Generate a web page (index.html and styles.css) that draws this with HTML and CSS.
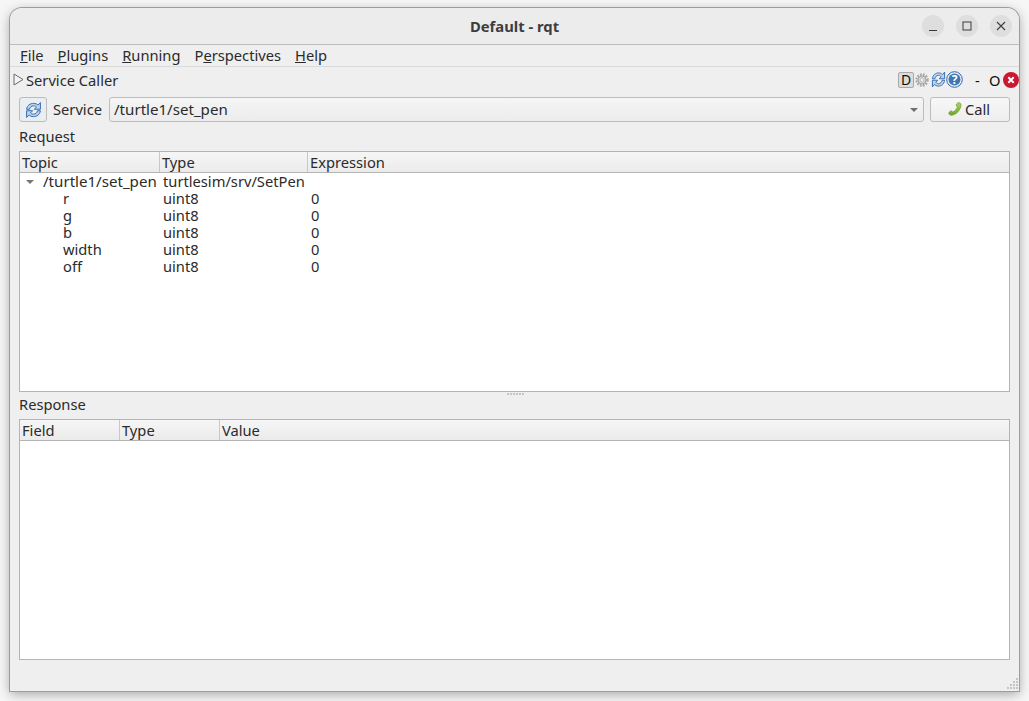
FILE: index.html
```html
<!DOCTYPE html>
<html lang="en">
<head>
    <meta charset="UTF-8">
    <title>Default - rqt</title>
    <link rel="stylesheet" href="styles.css">
</head>
<body>
    <div class="window">
        <header class="titlebar">
            <span class="title">Default - rqt</span>
            <div class="win-btns">
                <button class="win-btn"><svg width="12" height="12" viewBox="0 0 12 12"><path d="M2 10.500h8" stroke="#3d3d3d" stroke-width="1"/></svg></button>
                <button class="win-btn"><svg width="12" height="12" viewBox="0 0 12 12"><rect x="2" y="2" width="8" height="8" fill="none" stroke="#3d3d3d"/></svg></button>
                <button class="win-btn"><svg width="12" height="12" viewBox="0 0 12 12"><path d="M2 2l8 8M10 2l-8 8" stroke="#3d3d3d" stroke-width="1.100"/></svg></button>
            </div>
        </header>

        <nav class="menubar">
            <span><u>F</u>ile</span>
            <span><u>P</u>lugins</span>
            <span><u>R</u>unning</span>
            <span>P<u>e</u>rspectives</span>
            <span><u>H</u>elp</span>
        </nav>

        <div class="dock-title">
            <svg class="dock-arrow" width="11" height="13" viewBox="0 0 11 13"><path d="M1 1l9 5.500-9 5.500z" fill="#f4f4f4" stroke="#6a6a6a"/></svg>
            <span class="dock-name">Service Caller</span>
            <div class="dock-tools">
                <span class="tool-d">D</span>
                <svg width="14" height="16" viewBox="0 0 14 16"><circle cx="7" cy="8" r="5.500" fill="none" stroke="#a8a8a8" stroke-width="2.400" stroke-dasharray="1.800 1.100"/><circle cx="7" cy="8" r="4" fill="#dedede" stroke="#8f8f8f" stroke-width=".8"/><circle cx="7" cy="8" r="2" fill="#efefef" stroke="#a8a8a8" stroke-width=".7"/></svg>
                <svg class="tool-refresh" width="15" height="17" viewBox="0 0 16 16" preserveAspectRatio="none"><path d="M1.500 7.300C2 3.500 5 1.800 8 1.800c2 0 3.300.6 4.300 1.600L14.500 1v6.300H8.800l2-2C10 4.400 9 4.100 8 4.100 6 4.100 4.600 5.200 4.200 7.300z" fill="#bcd4ee" stroke="#2f68ab" stroke-width=".9"/><path d="M14.500 8.700C14 12.500 11 14.200 8 14.200c-2 0-3.300-.6-4.300-1.600L1.500 15V8.700h5.700l-2 2c.8.900 1.800 1.200 2.800 1.200 2 0 3.400-1.100 3.800-3.200z" fill="#bcd4ee" stroke="#2f68ab" stroke-width=".9"/></svg>
                <svg width="17" height="17" viewBox="0 0 17 17"><circle cx="8.500" cy="8.500" r="7.800" fill="#eef3f9" stroke="#2f65a5" stroke-width="1"/><circle cx="8.500" cy="8.500" r="6" fill="#3f78b8"/><text x="8.500" y="12.500" class="help-q" text-anchor="middle">?</text></svg>
                <span class="tool-min">-</span>
                <span class="tool-float">O</span>
                <svg class="tool-close" width="16" height="16" viewBox="0 0 16 16"><circle cx="8" cy="8" r="8" fill="#c9182f"/><path d="M5.300 5.300l5.400 5.400M10.700 5.300l-5.400 5.400" stroke="#fff" stroke-width="2"/></svg>
            </div>
        </div>

        <div class="content">
            <div class="service-row">
                <button class="refresh-btn">
                    <svg width="17" height="18" viewBox="0 0 16 16"><path d="M1.500 7.300C2 3.500 5 1.800 8 1.800c2 0 3.300.6 4.300 1.600L14.500 1v6.300H8.800l2-2C10 4.400 9 4.100 8 4.100 6 4.100 4.600 5.200 4.200 7.300z" fill="#bcd4ee" stroke="#2f68ab" stroke-width=".9"/><path d="M14.500 8.700C14 12.500 11 14.200 8 14.200c-2 0-3.300-.6-4.300-1.600L1.500 15V8.700h5.700l-2 2c.8.900 1.800 1.200 2.800 1.200 2 0 3.400-1.100 3.800-3.200z" fill="#bcd4ee" stroke="#2f68ab" stroke-width=".9"/></svg>
                </button>
                <span class="service-label">Service</span>
                <div class="combo">
                    <span class="path">/turtle1/set_pen</span>
                    <i class="combo-arrow"></i>
                </div>
                <button class="call-btn">
                    <svg width="14" height="14" viewBox="0 0 14 14"><defs><linearGradient id="phone" x1="0" y1="0" x2="0" y2="1"><stop offset="0" stop-color="#a9d45f"/><stop offset="1" stop-color="#6ea82a"/></linearGradient></defs><path d="M10 .8c1.300-.5 2.600.3 3 1.300.2 2.500-1 5.500-3 7.700-2 2.200-5 3.700-7.400 3.400-1.100-.3-2-1.500-1.700-2.500.5-.9 1.500-1.800 2.300-1.900l1.600 1.200c1.700-.5 4.200-3.200 4.500-5L8.200 3c0-.8.900-1.800 1.800-2.200z" fill="url(#phone)" stroke="#5f9320" stroke-width=".6"/></svg>
                    <span>Call</span>
                </button>
            </div>

            <div class="group-label request-label">Request</div>
            <div class="tree request-tree">
                <div class="tree-head">
                    <div class="head-cell col-topic">Topic</div>
                    <div class="head-cell col-type">Type</div>
                    <div class="head-cell col-rest">Expression</div>
                </div>
                <div class="tree-row">
                    <div class="col-topic cell-parent"><i class="expander"></i><span class="path">/turtle1/set_pen</span></div>
                    <div class="col-type cell">turtlesim/srv/SetPen</div>
                    <div class="col-rest cell"></div>
                </div>
                <div class="tree-row">
                    <div class="col-topic cell-child">r</div>
                    <div class="col-type cell">uint8</div>
                    <div class="col-rest cell">0</div>
                </div>
                <div class="tree-row">
                    <div class="col-topic cell-child">g</div>
                    <div class="col-type cell">uint8</div>
                    <div class="col-rest cell">0</div>
                </div>
                <div class="tree-row">
                    <div class="col-topic cell-child">b</div>
                    <div class="col-type cell">uint8</div>
                    <div class="col-rest cell">0</div>
                </div>
                <div class="tree-row">
                    <div class="col-topic cell-child">width</div>
                    <div class="col-type cell">uint8</div>
                    <div class="col-rest cell">0</div>
                </div>
                <div class="tree-row">
                    <div class="col-topic cell-child">off</div>
                    <div class="col-type cell">uint8</div>
                    <div class="col-rest cell">0</div>
                </div>
            </div>

            <div class="splitter"><i></i><i></i><i></i><i></i><i></i><i></i></div>

            <div class="group-label response-label">Response</div>
            <div class="tree response-tree">
                <div class="tree-head">
                    <div class="head-cell col-field">Field</div>
                    <div class="head-cell col-rtype">Type</div>
                    <div class="head-cell col-rest">Value</div>
                </div>
            </div>
        </div>

        <footer class="statusbar">
            <svg width="14" height="14" viewBox="0 0 14 14" fill="#c4c4c4"><rect x="11" y="1" width="2" height="2"/><rect x="8" y="4" width="2" height="2"/><rect x="11" y="4" width="2" height="2"/><rect x="5" y="7" width="2" height="2"/><rect x="8" y="7" width="2" height="2"/><rect x="11" y="7" width="2" height="2"/><rect x="2" y="10" width="2" height="2"/><rect x="5" y="10" width="2" height="2"/><rect x="8" y="10" width="2" height="2"/><rect x="11" y="10" width="2" height="2"/></svg>
        </footer>
    </div>
</body>
</html>
```
FILE: styles.css
```css
* {
    box-sizing: border-box;
}

html, body {
    height: 100%;
}

body {
    margin: 0;
    padding: 8px 10px 10px;
    background: #f6f6f6;
    overflow: hidden;
    font-family: "Noto Sans", "Open Sans", sans-serif;
    font-size: 14.7px;
    color: #2b2b2b;
}

button {
    font: inherit;
    color: inherit;
    padding: 0;
}

.path {
    font-size: 15.1px;
}

/* window frame */
.window {
    display: flex;
    flex-direction: column;
    height: 683px;
    background: #efefef;
    border-radius: 12px 12px 0 0;
    box-shadow: 0 0 0 1px #9c9c9c, 0 3px 12px rgba(0, 0, 0, .35);
}

.titlebar {
    position: relative;
    flex: none;
    display: flex;
    align-items: center;
    justify-content: center;
    height: 37px;
    background: #ececec;
    border-bottom: 1px solid #bdbdbd;
    border-radius: 12px 12px 0 0;
}

.title {
    font-weight: 700;
    font-size: 14.8px;
    color: #3d3d3d;
}

.win-btns {
    position: absolute;
    right: 7px;
    top: 7px;
    display: flex;
    gap: 12px;
}

.win-btn {
    display: flex;
    align-items: center;
    justify-content: center;
    width: 22px;
    height: 22px;
    border: 0;
    border-radius: 50%;
    background: #dedede;
}

/* menu */
.menubar {
    flex: none;
    display: flex;
    gap: 14px;
    height: 22px;
    padding: 0 10px 2px;
    align-items: center;
    border-bottom: 1px solid #dadada;
}

/* dock title */
.dock-title {
    flex: none;
    display: flex;
    align-items: center;
    height: 27px;
    padding: 0 0 2px 3px;
}

.dock-arrow {
    margin-right: 2px;
}

.dock-tools {
    display: flex;
    align-items: center;
    margin-left: auto;
}

.tool-d {
    width: 16px;
    height: 16px;
    margin-right: 1px;
    border: 1px solid #a8a8a8;
    border-radius: 2px;
    background: #dcdcdc;
    text-align: center;
    line-height: 14px;
    font-size: 14px;
    color: #111;
}

.tool-refresh {
    margin-left: 2px;
}

.tool-min {
    margin-left: 12px;
    width: 14px;
    color: #111;
}

.tool-float {
    color: #111;
    width: 12px;
}

.tool-close {
    margin-left: 2px;
}

.help-q {
    font-size: 12px;
    font-weight: 700;
    fill: #fff;
}

/* service row and trees */
.content {
    flex: none;
    padding: 3px 9px 0;
}

.service-row {
    display: flex;
    align-items: center;
    height: 25px;
}

.refresh-btn {
    display: flex;
    align-items: center;
    justify-content: center;
    width: 28px;
    height: 25px;
    border: 1px solid #bcbcbc;
    border-radius: 3px;
    background: #e9eef3;
}

.service-label {
    margin: 0 7px 2px 6px;
}

.combo {
    position: relative;
    flex: 1;
    height: 25px;
    padding-left: 4px;
    line-height: 22px;
    border: 1px solid #bcbcbc;
    border-radius: 3px;
    background: linear-gradient(#f5f5f5, #ececec);
}

.combo-arrow {
    position: absolute;
    right: 5px;
    top: 10px;
    border-left: 4px solid transparent;
    border-right: 4px solid transparent;
    border-top: 4px solid #6f6f6f;
}

.call-btn {
    display: flex;
    align-items: center;
    justify-content: center;
    gap: 3px;
    width: 80px;
    height: 25px;
    margin-left: 6px;
    padding: 0 2px 2px 0;
    border: 1px solid #bcbcbc;
    border-radius: 3px;
    background: linear-gradient(#f7f7f7, #eeeeee);
}

.group-label {
    height: 19px;
    line-height: 19px;
}

.request-label {
    margin-top: 5px;
}

.tree {
    background: #fff;
    border: 1px solid #b4b4b4;
}

.request-tree {
    margin-top: 5px;
    height: 241px;
}

.response-tree {
    margin-top: 5px;
    height: 241px;
}

.tree-head {
    display: flex;
    height: 21px;
    background: linear-gradient(#f6f6f6, #ebebeb);
    border-bottom: 1px solid #b4b4b4;
}

.head-cell {
    padding-left: 2px;
    line-height: 21px;
    border-right: 1px solid #c8c8c8;
}

.head-cell:last-child {
    border-right: 0;
}

.col-topic {
    flex: none;
    width: 140px;
}

.col-type {
    flex: none;
    width: 148px;
}

.col-field,
.col-rtype {
    flex: none;
    width: 100px;
}

.col-rest {
    flex: 1;
}

.tree-row {
    display: flex;
    height: 17px;
    line-height: 17px;
}

.cell {
    padding-left: 3px;
    white-space: nowrap;
}

.cell-parent {
    display: flex;
    align-items: center;
    white-space: nowrap;
}

.cell-child {
    padding-left: 43px;
}

.expander {
    flex: none;
    width: 0;
    height: 0;
    margin: 0 9px 0 6px;
    border-left: 4px solid transparent;
    border-right: 4px solid transparent;
    border-top: 4px solid #777;
}

.splitter {
    display: flex;
    justify-content: center;
    gap: 1px;
    height: 3px;
    padding: 1px 0 0 2px;
}

.splitter i {
    width: 2px;
    height: 2px;
    background: #c4c4c4;
}

.statusbar {
    flex: 1;
    display: flex;
    align-items: flex-end;
    justify-content: flex-end;
}
```
